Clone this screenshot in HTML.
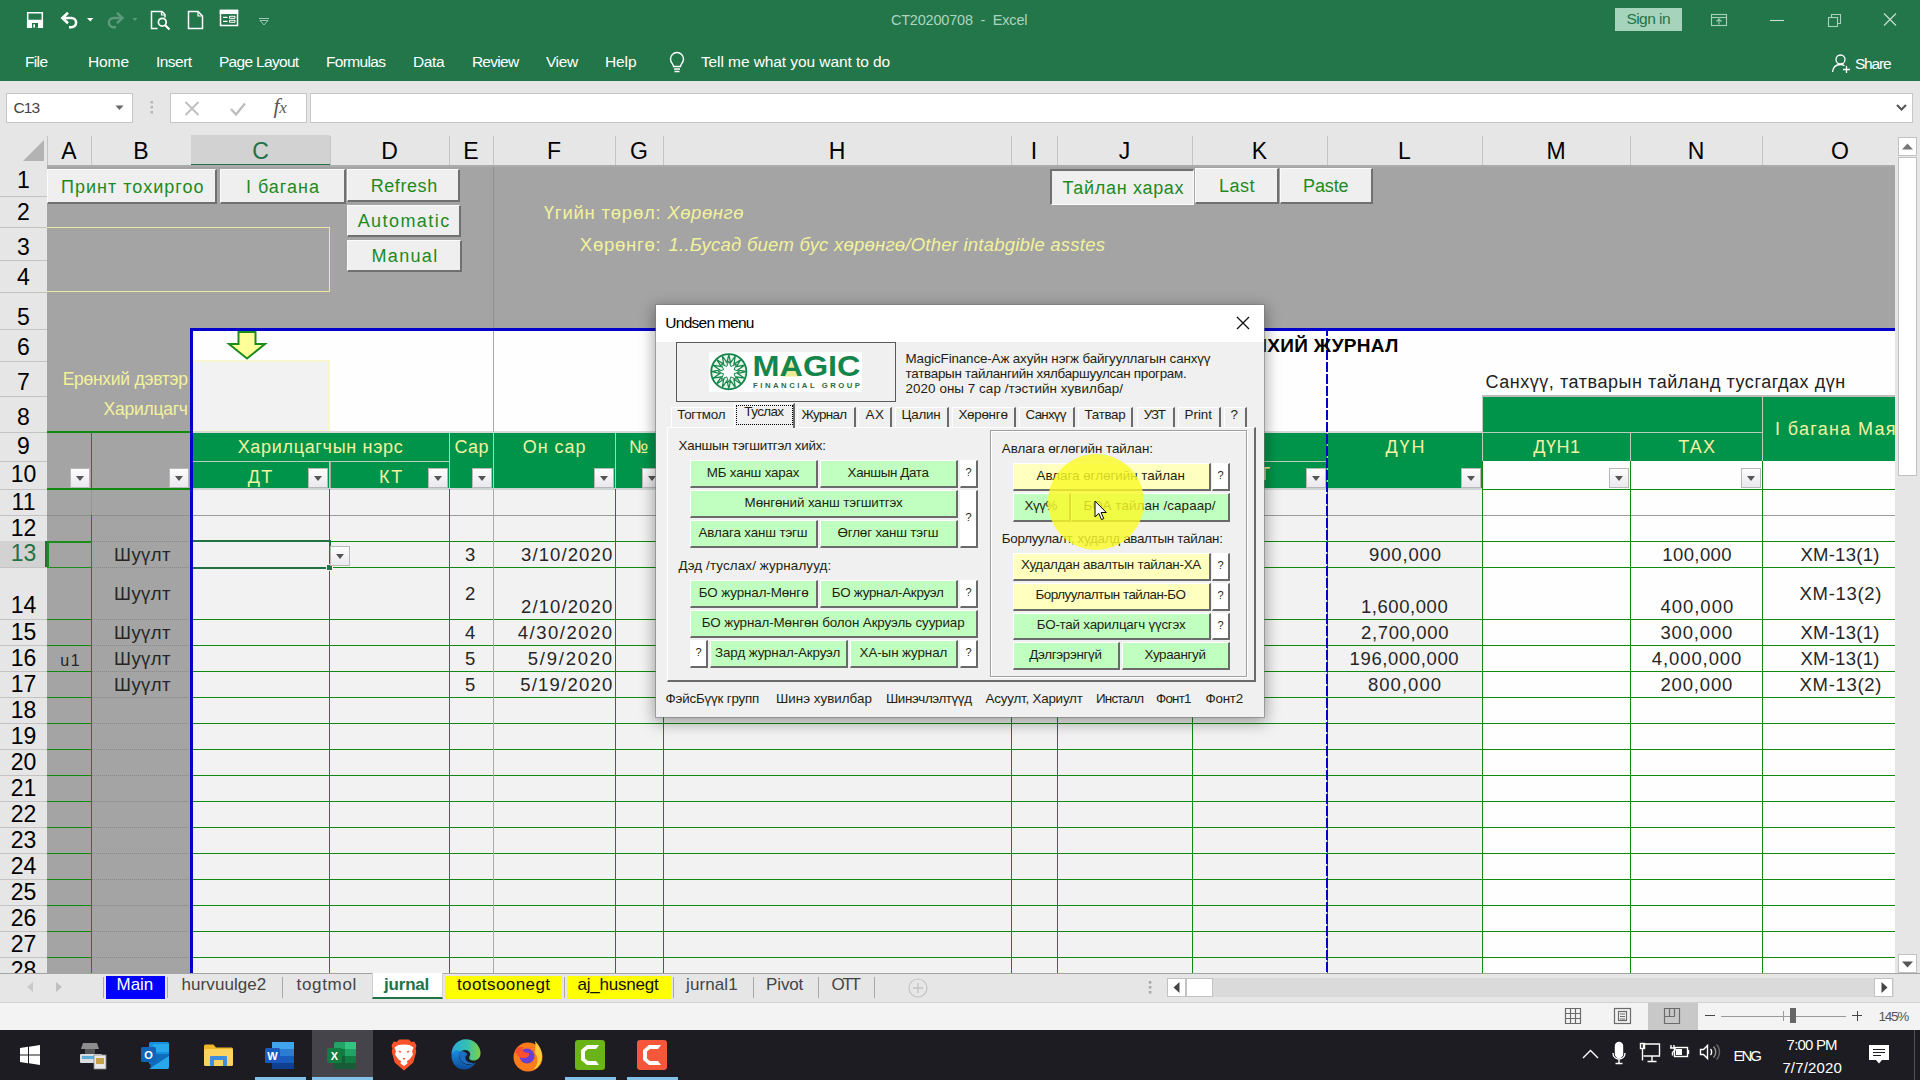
<!DOCTYPE html><html lang="mn"><head><meta charset="utf-8"><title>CT20200708 - Excel</title><style>

*{box-sizing:border-box}
html,body{margin:0;padding:0}
body{width:1920px;height:1080px;overflow:hidden;position:relative;background:#e6e6e6;
 font-family:"Liberation Sans",sans-serif;color:#000}
.a{position:absolute}
.t{position:absolute;white-space:nowrap;line-height:1}
svg{position:absolute;overflow:visible}


#tb{left:0;top:0;width:1920px;height:80.5px;background:#22764a}
.w{color:#fff}
.rt{font-size:15.5px;color:#fff;top:54px}
#fb{left:0;top:81px;width:1920px;height:54px;background:#e6e6e6}
.box{background:#fff;border:1px solid #c6c6c6}
.ch{top:135px;height:31px;font-size:23px;text-align:center;line-height:32px;color:#000}
.rh{left:0;width:47px;font-size:23px;text-align:center;color:#000;line-height:24px}


#grid{left:47px;top:166px;width:1848px;height:807px;background:#a4a4a4;overflow:hidden}
.g{position:absolute;background:#0f8a0f}
.hd{position:absolute;background:#00944a;color:#f3f3a2;font-size:17.500px;text-align:center;white-space:nowrap;overflow:hidden}
.fl{position:absolute;width:20px;height:20px;background:linear-gradient(#fdfdfd,#e9e9ee);border:1px solid #b8b8b8}
.fl:after{content:"";position:absolute;left:5px;top:7px;border:4px solid transparent;border-top:5px solid #555;border-bottom:0}
.c{position:absolute;white-space:nowrap;color:#262626}
.sb{position:absolute;background:#efefef;border:1px solid #fbfbfb;border-right:2px solid #707070;border-bottom:2px solid #707070}
.sbp{position:absolute;background:#efefef;border:2px solid #707070;border-right:1px solid #fbfbfb;border-bottom:1px solid #fbfbfb}
.yl{position:absolute;color:#eeeaa0;font-size:17px;white-space:nowrap;line-height:1}


#tabs{left:0;top:973px;width:1920px;height:30px;background:#e6e6e6;border-top:1px solid #a3a3a3;border-bottom:1px solid #d0d0d0}
#status{left:0;top:1003px;width:1920px;height:27px;background:#f3f3f3}
#task{left:0;top:1030px;width:1920px;height:50px;background:#1d1c22}
.st{position:absolute;top:976px;font-size:17.500px;color:#444;white-space:nowrap;line-height:1}
.sep{position:absolute;top:977px;width:1px;height:21px;background:#a8a8a8}
.tk{position:absolute;color:#fff;white-space:nowrap;line-height:1;font-size:15px}
.ul{position:absolute;top:1077px;height:3px;background:#84c1e6}


#dlg{left:656px;top:305px;width:608px;height:412px;background:#f0f0f0;box-shadow:0 0 0 1px rgba(120,120,120,.55),0 4px 14px 2px rgba(0,0,0,.35)}
#dlg .ttl{left:0;top:0;width:608px;height:37px;background:#fff}
.b{position:absolute;height:27px;border:1px solid #fff;border-right:2px solid #6a6a6a;border-bottom:2px solid #6a6a6a;
 font-size:13px;line-height:22px;text-align:center;white-space:nowrap;color:#1f1f10;word-spacing:2.500px;letter-spacing:.15px;overflow:hidden}
.bg{background:#c1ffc1}
.by{background:#ffffc0}
.bq{background:#fff;font-size:11px;letter-spacing:0}
.lb{position:absolute;font-size:13px;white-space:nowrap;line-height:1;color:#1f1f10;word-spacing:2.500px;letter-spacing:.15px}
.tab{position:absolute;top:102px;height:19px;background:#f0f0f0;border-top:1px solid #fff;border-left:1px solid #fff;border-right:2px solid #6a6a6a;
 font-size:13px;line-height:17px;text-align:center;color:#1f1f10;white-space:nowrap;letter-spacing:.1px}

</style></head><body>
<div class="a" id="grid">
<div class="a" style="left:146px;top:165px;width:1702px;height:101px;background:#fefefe"></div>
<div class="a" style="left:146px;top:194px;width:137px;height:72px;background:#f2f2f2;border:2px solid #f7f7cf;border-left:0"></div>
<div class="a" style="left:146px;top:323px;width:1289px;height:484px;background:#f2f2f2"></div>
<div class="a" style="left:1435px;top:295px;width:413px;height:512px;background:#fefefe"></div>
<div class="hd" style="left:146px;top:266px;width:256px;height:29px;line-height:29px;"></div>
<div class="hd" style="left:146px;top:296px;width:137px;height:27px;line-height:27px;"></div>
<div class="hd" style="left:284px;top:296px;width:118px;height:27px;line-height:27px;"></div>
<div class="hd" style="left:403px;top:266px;width:43px;height:57px;line-height:57px;"></div>
<div class="hd" style="left:447px;top:266px;width:121px;height:57px;line-height:57px;"></div>
<div class="hd" style="left:569px;top:266px;width:47px;height:57px;line-height:57px;"></div>
<div class="hd" style="left:617px;top:266px;width:663px;height:57px;line-height:57px;"></div>
<div class="hd" style="left:1281px;top:266px;width:154px;height:57px;line-height:57px;"></div>
<div class="hd" style="left:1436px;top:230px;width:279px;height:36px;line-height:36px;"></div>
<div class="hd" style="left:1436px;top:267px;width:147px;height:28px;line-height:28px;"></div>
<div class="hd" style="left:1584px;top:267px;width:131px;height:28px;line-height:28px;"></div>
<div class="hd" style="left:1716px;top:230px;width:132px;height:65px;line-height:65px;"></div>
<div class="a" style="left:282px;top:296px;width:1px;height:27px;background:#b9cdbf"></div>
<div class="a" style="left:402px;top:266px;width:1px;height:57px;background:#b9cdbf"></div>
<div class="a" style="left:446px;top:266px;width:1px;height:57px;background:#b9cdbf"></div>
<div class="a" style="left:568px;top:266px;width:1px;height:57px;background:#b9cdbf"></div>
<div class="a" style="left:616px;top:266px;width:1px;height:57px;background:#b9cdbf"></div>
<div class="a" style="left:1280px;top:266px;width:1px;height:57px;background:#b9cdbf"></div>
<div class="a" style="left:146px;top:295px;width:256px;height:1px;background:#b9cdbf"></div>
<div class="a" style="left:1435px;top:229px;width:413px;height:2px;background:#bdbdbd"></div>
<div class="a" style="left:146px;top:265px;width:1289px;height:2px;background:#d9d9d9"></div>
<div class="a" style="left:1435px;top:266px;width:280px;height:1px;background:#b9cdbf"></div>
<div class="a" style="left:1435px;top:230px;width:1px;height:65px;background:#b9cdbf"></div>
<div class="a" style="left:1583px;top:230px;width:1px;height:29px;top:266px;background:#b9cdbf"></div>
<div class="a" style="left:1715px;top:230px;width:1px;height:65px;background:#b9cdbf"></div>
<div class="g" style="left:0;top:265px;width:143px;height:2px"></div>
<div class="g" style="left:0;top:322px;width:143px;height:2px"></div>
<div class="g" style="left:44px;top:266px;width:1px;height:57px"></div>
<div class="g" style="left:0;top:375px;width:44px;height:1px"></div>
<div class="g" style="left:146px;top:375px;width:1702px;height:1px"></div>
<div class="a" style="left:45px;top:375px;width:98px;height:1px;background:repeating-linear-gradient(90deg,#8a8a8a 0 1px,#a0a0a0 1px 2px)"></div>
<div class="g" style="left:0;top:401px;width:44px;height:1px"></div>
<div class="g" style="left:146px;top:401px;width:1702px;height:1px"></div>
<div class="a" style="left:45px;top:401px;width:98px;height:1px;background:repeating-linear-gradient(90deg,#8a8a8a 0 1px,#a0a0a0 1px 2px)"></div>
<div class="g" style="left:0;top:453px;width:44px;height:1px"></div>
<div class="g" style="left:146px;top:453px;width:1702px;height:1px"></div>
<div class="a" style="left:45px;top:453px;width:98px;height:1px;background:repeating-linear-gradient(90deg,#8a8a8a 0 1px,#a0a0a0 1px 2px)"></div>
<div class="g" style="left:0;top:479px;width:44px;height:1px"></div>
<div class="g" style="left:146px;top:479px;width:1702px;height:1px"></div>
<div class="a" style="left:45px;top:479px;width:98px;height:1px;background:repeating-linear-gradient(90deg,#8a8a8a 0 1px,#a0a0a0 1px 2px)"></div>
<div class="g" style="left:0;top:505px;width:44px;height:1px"></div>
<div class="g" style="left:146px;top:505px;width:1702px;height:1px"></div>
<div class="a" style="left:45px;top:505px;width:98px;height:1px;background:repeating-linear-gradient(90deg,#8a8a8a 0 1px,#a0a0a0 1px 2px)"></div>
<div class="g" style="left:0;top:531px;width:44px;height:1px"></div>
<div class="g" style="left:146px;top:531px;width:1702px;height:1px"></div>
<div class="a" style="left:45px;top:531px;width:98px;height:1px;background:repeating-linear-gradient(90deg,#8a8a8a 0 1px,#a0a0a0 1px 2px)"></div>
<div class="g" style="left:0;top:557px;width:44px;height:1px"></div>
<div class="g" style="left:146px;top:557px;width:1702px;height:1px"></div>
<div class="a" style="left:45px;top:557px;width:98px;height:1px;background:repeating-linear-gradient(90deg,#8a8a8a 0 1px,#a0a0a0 1px 2px)"></div>
<div class="g" style="left:0;top:583px;width:44px;height:1px"></div>
<div class="g" style="left:146px;top:583px;width:1702px;height:1px"></div>
<div class="a" style="left:45px;top:583px;width:98px;height:1px;background:repeating-linear-gradient(90deg,#8a8a8a 0 1px,#a0a0a0 1px 2px)"></div>
<div class="g" style="left:0;top:609px;width:44px;height:1px"></div>
<div class="g" style="left:146px;top:609px;width:1702px;height:1px"></div>
<div class="a" style="left:45px;top:609px;width:98px;height:1px;background:repeating-linear-gradient(90deg,#8a8a8a 0 1px,#a0a0a0 1px 2px)"></div>
<div class="g" style="left:0;top:635px;width:44px;height:1px"></div>
<div class="g" style="left:146px;top:635px;width:1702px;height:1px"></div>
<div class="a" style="left:45px;top:635px;width:98px;height:1px;background:repeating-linear-gradient(90deg,#8a8a8a 0 1px,#a0a0a0 1px 2px)"></div>
<div class="g" style="left:0;top:661px;width:44px;height:1px"></div>
<div class="g" style="left:146px;top:661px;width:1702px;height:1px"></div>
<div class="a" style="left:45px;top:661px;width:98px;height:1px;background:repeating-linear-gradient(90deg,#8a8a8a 0 1px,#a0a0a0 1px 2px)"></div>
<div class="g" style="left:0;top:687px;width:44px;height:1px"></div>
<div class="g" style="left:146px;top:687px;width:1702px;height:1px"></div>
<div class="a" style="left:45px;top:687px;width:98px;height:1px;background:repeating-linear-gradient(90deg,#8a8a8a 0 1px,#a0a0a0 1px 2px)"></div>
<div class="g" style="left:0;top:713px;width:44px;height:1px"></div>
<div class="g" style="left:146px;top:713px;width:1702px;height:1px"></div>
<div class="a" style="left:45px;top:713px;width:98px;height:1px;background:repeating-linear-gradient(90deg,#8a8a8a 0 1px,#a0a0a0 1px 2px)"></div>
<div class="g" style="left:0;top:739px;width:44px;height:1px"></div>
<div class="g" style="left:146px;top:739px;width:1702px;height:1px"></div>
<div class="a" style="left:45px;top:739px;width:98px;height:1px;background:repeating-linear-gradient(90deg,#8a8a8a 0 1px,#a0a0a0 1px 2px)"></div>
<div class="g" style="left:0;top:765px;width:44px;height:1px"></div>
<div class="g" style="left:146px;top:765px;width:1702px;height:1px"></div>
<div class="a" style="left:45px;top:765px;width:98px;height:1px;background:repeating-linear-gradient(90deg,#8a8a8a 0 1px,#a0a0a0 1px 2px)"></div>
<div class="g" style="left:0;top:791px;width:44px;height:1px"></div>
<div class="g" style="left:146px;top:791px;width:1702px;height:1px"></div>
<div class="a" style="left:45px;top:791px;width:98px;height:1px;background:repeating-linear-gradient(90deg,#8a8a8a 0 1px,#a0a0a0 1px 2px)"></div>
<div class="a" style="left:146px;top:322px;width:1289px;height:2px;background:#cfd6d1"></div>
<div class="g" style="left:1435px;top:323px;width:413px;height:1px"></div>
<div class="a" style="left:617px;top:295px;width:662px;height:1px;background:#b9cdbf"></div>
<div class="a" style="left:0;top:349px;width:1848px;height:1px;background:#9b9b9b"></div>
<div class="a" style="left:0;top:349px;width:143px;height:1px;background:#8f8f8f"></div>
<div class="g" style="left:282px;top:323px;width:1px;height:484px"></div>
<div class="g" style="left:402px;top:323px;width:1px;height:484px"></div>
<div class="g" style="left:568px;top:323px;width:1px;height:484px"></div>
<div class="g" style="left:616px;top:323px;width:1px;height:484px"></div>
<div class="g" style="left:964px;top:323px;width:1px;height:484px"></div>
<div class="g" style="left:1010px;top:323px;width:1px;height:484px"></div>
<div class="g" style="left:1145px;top:323px;width:1px;height:484px"></div>
<div class="g" style="left:1435px;top:295px;width:1px;height:512px"></div>
<div class="g" style="left:1583px;top:295px;width:1px;height:512px"></div>
<div class="g" style="left:1715px;top:295px;width:1px;height:512px"></div>
<div class="g" style="left:44px;top:349px;width:1px;height:458px"></div>
<div class="a" style="left:44px;top:324px;width:1px;height:25px;background:repeating-linear-gradient(180deg,#8a8a8a 0 1px,#a0a0a0 1px 2px)"></div>
<div class="a" style="left:446px;top:0;width:1px;height:163px;background:#8e8e8e"></div>
<div class="a" style="left:446px;top:165px;width:1px;height:101px;background:#a9a9a9"></div>
<div class="a" style="left:446px;top:323px;width:1px;height:484px;background:#a9a9a9"></div>
<div class="a" style="left:143px;top:162px;width:1705px;height:3px;background:#0000cc"></div>
<div class="a" style="left:143px;top:162px;width:3px;height:645px;background:#0000cc"></div>
<div class="g" style="left:1280px;top:323px;width:1px;height:484px"></div>
<div class="a" style="left:1279px;top:165px;width:2px;height:642px;overflow:hidden"><div class="a" style="left:0;top:-7px;width:2px;height:660px;background:repeating-linear-gradient(180deg,transparent 0 2px,#0000cc 2px 12px)"></div></div>
<div class="fl" style="left:23px;top:302px"></div>
<div class="fl" style="left:122px;top:302px"></div>
<div class="fl" style="left:261px;top:302px"></div>
<div class="fl" style="left:381px;top:302px"></div>
<div class="fl" style="left:425px;top:302px"></div>
<div class="fl" style="left:547px;top:302px"></div>
<div class="fl" style="left:595px;top:302px"></div>
<div class="fl" style="left:1259px;top:302px"></div>
<div class="fl" style="left:1414px;top:302px"></div>
<div class="fl" style="left:1562px;top:302px"></div>
<div class="fl" style="left:1694px;top:302px"></div>
<div class="sb" style="left:0px;top:3px;width:170px;height:35px"></div>
<div class="c" style="left:14.0px;top:11.5px;font-size:18px;line-height:18px;letter-spacing:1.02px;color:#1e8a1e;">Принт тохиргоо</div>
<div class="sb" style="left:173px;top:3px;width:126px;height:35px"></div>
<div class="c" style="left:199.0px;top:11.5px;font-size:18px;line-height:18px;letter-spacing:0.99px;color:#1e8a1e;">I багана</div>
<div class="sb" style="left:300px;top:3px;width:113px;height:33px"></div>
<div class="c" style="left:323.7px;top:10.5px;font-size:18px;line-height:18px;letter-spacing:0.58px;color:#1e8a1e;">Refresh</div>
<div class="sb" style="left:300px;top:39px;width:114px;height:32px"></div>
<div class="c" style="left:310.7px;top:46.0px;font-size:18px;line-height:18px;letter-spacing:1.43px;color:#1e8a1e;">Automatic</div>
<div class="sb" style="left:300px;top:74px;width:115px;height:32px"></div>
<div class="c" style="left:324.5px;top:80.5px;font-size:18px;line-height:18px;letter-spacing:1.33px;color:#1e8a1e;">Manual</div>
<div class="sbp" style="left:1003px;top:3px;width:144px;height:36px"></div>
<div class="c" style="left:1015.5px;top:13.0px;font-size:18px;line-height:18px;letter-spacing:0.68px;color:#1e8a1e;">Тайлан харах</div>
<div class="sb" style="left:1148px;top:2px;width:84px;height:36px"></div>
<div class="c" style="left:1172.0px;top:10.6px;font-size:18px;line-height:18px;letter-spacing:0.49px;color:#1e8a1e;">Last</div>
<div class="sb" style="left:1233px;top:2px;width:93px;height:36px"></div>
<div class="c" style="left:1256.0px;top:10.6px;font-size:18px;line-height:18px;letter-spacing:-0.13px;color:#1e8a1e;">Paste</div>
<div class="a" style="left:-2px;top:61px;width:285px;height:65px;border:1px solid #e9e7a3"></div>
<svg style="left:180px;top:165px" width="40" height="29" viewBox="0 0 40 29"><path d="M11.500 1h17v12h9.500l-18 14.500-18-14.500h9.500z" fill="#ffff99" stroke="#1c8c1c" stroke-width="2"/></svg>
<div class="c" style="left:15.7px;top:204.6px;font-size:17.5px;line-height:17.5px;letter-spacing:-0.28px;color:#f2f29c;">Ерөнхий дэвтэр</div>
<div class="c" style="left:56.5px;top:234.6px;font-size:17.5px;line-height:17.5px;letter-spacing:-0.24px;color:#f2f29c;">Харилцагч</div>
<div class="c" style="left:496.8px;top:37.6px;font-size:18.5px;line-height:18.5px;letter-spacing:0.78px;color:#f2f29c;">Үгийн төрөл:</div>
<div class="c" style="left:532.8px;top:69.7px;font-size:18.5px;line-height:18.5px;letter-spacing:0.76px;color:#f2f29c;">Хөрөнгө:</div>
<div class="c" style="left:620.3px;top:37.6px;font-size:18.5px;line-height:18.5px;letter-spacing:0.57px;color:#f2f29c;font-style:italic;">Хөрөнгө</div>
<div class="c" style="left:621.5px;top:69.7px;font-size:18.5px;line-height:18.5px;letter-spacing:0.23px;color:#f2f29c;font-style:italic;">1..Бусад биет бус хөрөнгө/Other intabgible asstes</div>
<div class="c" style="left:1165.3px;top:169.9px;font-size:19px;line-height:19px;letter-spacing:0.29px;color:#000;font-weight:bold;">ЕРӨНХИЙ ЖУРНАЛ</div>
<div class="c" style="left:1438.4px;top:207.0px;font-size:18px;line-height:18px;letter-spacing:0.55px;color:#222;">Санхүү, татварын тайланд тусгагдах дүн</div>
<div class="c" style="left:190.7px;top:272.0px;font-size:18px;line-height:18px;letter-spacing:0.68px;color:#f3f3a2;">Харилцагчын нэрс</div>
<div class="c" style="left:200.7px;top:301.5px;font-size:18px;line-height:18px;letter-spacing:1.31px;color:#f3f3a2;">ДТ</div>
<div class="c" style="left:332.0px;top:301.5px;font-size:18px;line-height:18px;letter-spacing:1.72px;color:#f3f3a2;">КТ</div>
<div class="c" style="left:407.5px;top:272.0px;font-size:18px;line-height:18px;letter-spacing:0.39px;color:#f3f3a2;">Сар</div>
<div class="c" style="left:475.7px;top:272.0px;font-size:18px;line-height:18px;letter-spacing:0.97px;color:#f3f3a2;">Он сар</div>
<div class="c" style="left:582.0px;top:272.0px;font-size:18px;line-height:18px;letter-spacing:1.39px;color:#f3f3a2;">№</div>
<div class="c" style="left:1200.0px;top:299.0px;font-size:18px;line-height:18px;letter-spacing:1.52px;color:#f3f3a2;">КТ</div>
<div class="c" style="left:1338.4px;top:272.0px;font-size:18px;line-height:18px;letter-spacing:1.9px;color:#f3f3a2;">ДҮН</div>
<div class="c" style="left:1486.2px;top:272.0px;font-size:18px;line-height:18px;letter-spacing:0.53px;color:#f3f3a2;">ДҮН1</div>
<div class="c" style="left:1631.3px;top:272.0px;font-size:18px;line-height:18px;letter-spacing:1.1px;color:#f3f3a2;">ТАХ</div>
<div class="c" style="left:1728.1px;top:254.0px;font-size:18px;line-height:18px;letter-spacing:1.31px;color:#f3f3a2;">I багана Маягт</div>
<div class="c" style="left:67.0px;top:380.1px;font-size:18.5px;line-height:18.5px;letter-spacing:0.42px;color:#262626;">Шуүлт</div>
<div class="c" style="left:67.0px;top:419.2px;font-size:18.5px;line-height:18.5px;letter-spacing:0.42px;color:#262626;">Шуүлт</div>
<div class="c" style="left:67.0px;top:457.9px;font-size:18.5px;line-height:18.5px;letter-spacing:0.42px;color:#262626;">Шуүлт</div>
<div class="c" style="left:67.0px;top:484.1px;font-size:18.5px;line-height:18.5px;letter-spacing:0.42px;color:#262626;">Шуүлт</div>
<div class="c" style="left:67.0px;top:510.1px;font-size:18.5px;line-height:18.5px;letter-spacing:0.42px;color:#262626;">Шуүлт</div>
<div class="c" style="left:13.2px;top:487.4px;font-size:16px;line-height:16px;letter-spacing:1.7px;color:#262626;">u1</div>
<div class="c" style="left:418.0px;top:380.1px;font-size:18.5px;line-height:18.5px;letter-spacing:1.71px;color:#262626;">3</div>
<div class="c" style="left:474.0px;top:380.1px;font-size:18.5px;line-height:18.5px;letter-spacing:1.11px;color:#262626;">3/10/2020</div>
<div class="c" style="left:1322.0px;top:380.1px;font-size:18.5px;line-height:18.5px;letter-spacing:0.85px;color:#262626;">900,000</div>
<div class="c" style="left:1615.3px;top:380.1px;font-size:18.5px;line-height:18.5px;letter-spacing:0.4px;color:#262626;">100,000</div>
<div class="c" style="left:1753.4px;top:380.1px;font-size:18.5px;line-height:18.5px;letter-spacing:0.27px;color:#262626;">ХМ-13(1)</div>
<div class="c" style="left:418.0px;top:419.2px;font-size:18.5px;line-height:18.5px;letter-spacing:1.71px;color:#262626;">2</div>
<div class="c" style="left:474.0px;top:432.2px;font-size:18.5px;line-height:18.5px;letter-spacing:1.11px;color:#262626;">2/10/2020</div>
<div class="c" style="left:1314.0px;top:432.2px;font-size:18.5px;line-height:18.5px;letter-spacing:0.55px;color:#262626;">1,600,000</div>
<div class="c" style="left:1613.4px;top:432.2px;font-size:18.5px;line-height:18.5px;letter-spacing:0.99px;color:#262626;">400,000</div>
<div class="c" style="left:1752.6px;top:419.2px;font-size:18.5px;line-height:18.5px;letter-spacing:0.67px;color:#262626;">ХМ-13(2)</div>
<div class="c" style="left:418.0px;top:457.9px;font-size:18.5px;line-height:18.5px;letter-spacing:1.71px;color:#262626;">4</div>
<div class="c" style="left:470.7px;top:457.9px;font-size:18.5px;line-height:18.5px;letter-spacing:1.52px;color:#262626;">4/30/2020</div>
<div class="c" style="left:1314.0px;top:457.9px;font-size:18.5px;line-height:18.5px;letter-spacing:0.65px;color:#262626;">2,700,000</div>
<div class="c" style="left:1613.4px;top:457.9px;font-size:18.5px;line-height:18.5px;letter-spacing:0.85px;color:#262626;">300,000</div>
<div class="c" style="left:1753.4px;top:457.9px;font-size:18.5px;line-height:18.5px;letter-spacing:0.27px;color:#262626;">ХМ-13(1)</div>
<div class="c" style="left:418.0px;top:484.1px;font-size:18.5px;line-height:18.5px;letter-spacing:1.71px;color:#262626;">5</div>
<div class="c" style="left:480.7px;top:484.1px;font-size:18.5px;line-height:18.5px;letter-spacing:1.78px;color:#262626;">5/9/2020</div>
<div class="c" style="left:1302.6px;top:484.1px;font-size:18.5px;line-height:18.5px;letter-spacing:0.61px;color:#262626;">196,000,000</div>
<div class="c" style="left:1604.8px;top:484.1px;font-size:18.5px;line-height:18.5px;letter-spacing:0.9px;color:#262626;">4,000,000</div>
<div class="c" style="left:1753.4px;top:484.1px;font-size:18.5px;line-height:18.5px;letter-spacing:0.27px;color:#262626;">ХМ-13(1)</div>
<div class="c" style="left:418.0px;top:510.1px;font-size:18.5px;line-height:18.5px;letter-spacing:1.71px;color:#262626;">5</div>
<div class="c" style="left:473.2px;top:510.1px;font-size:18.5px;line-height:18.5px;letter-spacing:1.21px;color:#262626;">5/19/2020</div>
<div class="c" style="left:1321.0px;top:510.1px;font-size:18.5px;line-height:18.5px;letter-spacing:1.02px;color:#262626;">800,000</div>
<div class="c" style="left:1613.4px;top:510.1px;font-size:18.5px;line-height:18.5px;letter-spacing:0.85px;color:#262626;">200,000</div>
<div class="c" style="left:1752.6px;top:510.1px;font-size:18.5px;line-height:18.5px;letter-spacing:0.67px;color:#262626;">ХМ-13(2)</div>
<div class="a" style="left:146px;top:374px;width:138px;height:29px;border:2px solid #217346;border-left:0"></div>
<div class="a" style="left:279px;top:398px;width:7px;height:7px;background:#217346;border:1px solid #f2f2f2"></div>
<div class="fl" style="left:283px;top:380px;width:20px;height:20px"></div>
<div class="a" style="left:0;top:375px;width:45px;height:27px;border:1px solid #1c8c1c;border-width:2px 1px 1px 2px"></div>
</div>
<div class="a" id="tb"></div>
<svg style="left:26px;top:9px" width="260" height="24" viewBox="0 0 260 24" fill="none" stroke="#fff" stroke-width="1.500">
<path d="M1.700 3.700h14.600v14.600h-14.600z"/><path d="M1.700 11.500h14.600v6.800h-14.600z" fill="#fff"/><rect x="6" y="14" width="6" height="4.800" fill="#217346" stroke="none"/><rect x="7.300" y="15.300" width="1.700" height="3" fill="#fff" stroke="none"/>
<path d="M38 9h7.500a4.600 4.600 0 0 1 0 9.200h-2.500" stroke-width="2.600"/><path d="M42 3.800l-5.600 5.200 5.600 5.200" stroke-width="2.600"/>
<path d="M61 9h6.400l-3.200 3.600z" fill="#fff" stroke="none"/>
<path d="M95 9h-7.500a4.600 4.600 0 0 0 0 9.200h2.500" stroke="#5f9a7d" stroke-width="2.400"/><path d="M91 3.800l5.600 5.200-5.600 5.200" stroke="#5f9a7d" stroke-width="2.400"/>
<path d="M106.500 9h5l-2.500 3z" fill="#5f9a7d" stroke="none"/>
<path d="M139 8.500v-3l-3-3h-10.500v17h6"/><path d="M135.500 2.500v3.500h3.500" stroke-width="1.200"/><circle cx="136.300" cy="13.200" r="3.900" stroke-width="1.700"/><path d="M139.200 16.200l4.300 4.300" stroke-width="2.200"/>
<path d="M162.500 2.500h9.500l4.500 4.500v12.500h-14z"/><path d="M172 2.500v4.500h4.500" stroke-width="1.200"/>
<rect x="194.500" y="1.500" width="17" height="15"/><rect x="194.500" y="1.500" width="17" height="2.800" fill="#fff"/><path d="M197 8.300h4.500M197 12.300h4.500" stroke-width="1.300"/><path d="M203.500 7.300h5.500v2h-5.500zM203.500 11.300h5.500v2h-5.500z" stroke-width="1"/>
<path d="M233 9.500h10" stroke="#9cc7b0" stroke-width="1"/><path d="M234 11.500h8l-4 4.500z" stroke="#9cc7b0" stroke-width="1"/>
</svg>
<div class="t" style="left:890.9px;top:13px;font-size:14.5px;color:#acd5bf;letter-spacing:-0.19px;white-space:pre;">CT20200708  -  Excel</div>
<div class="a" style="left:1615px;top:8px;width:67px;height:23px;background:#a6d3bb"></div>
<div class="t" style="left:1626.4px;top:11px;font-size:15.5px;color:#217346;letter-spacing:-0.53px;">Sign in</div>
<svg style="left:1700px;top:8px" width="210" height="24" viewBox="0 0 210 24" fill="none" stroke="#a9d0bb" stroke-width="1.100">
<rect x="11.500" y="6.500" width="15" height="11"/><path d="M11.500 9.500h15"/><path d="M19 16.500v-5M16.500 13.500l2.500-2.500 2.500 2.500"/>
<path d="M70 12.500h14" stroke="#c4dfd0"/>
<rect x="128.500" y="9.500" width="9" height="9"/><path d="M131.500 9.500v-3h9v9h-3"/>
<path d="M184 5.500l12 12M196 5.500l-12 12" stroke="#c4dfd0" stroke-width="1.200"/>
</svg>
<div class="t" style="left:24.9px;top:54px;font-size:15.5px;color:#fff;letter-spacing:-0.59px;">File</div>
<div class="t" style="left:87.9px;top:54px;font-size:15.5px;color:#fff;letter-spacing:-0.05px;">Home</div>
<div class="t" style="left:155.9px;top:54px;font-size:15.5px;color:#fff;letter-spacing:-0.51px;">Insert</div>
<div class="t" style="left:218.9px;top:54px;font-size:15.5px;color:#fff;letter-spacing:-0.68px;">Page Layout</div>
<div class="t" style="left:325.9px;top:54px;font-size:15.5px;color:#fff;letter-spacing:-0.63px;">Formulas</div>
<div class="t" style="left:412.9px;top:54px;font-size:15.5px;color:#fff;letter-spacing:-0.35px;">Data</div>
<div class="t" style="left:471.9px;top:54px;font-size:15.5px;color:#fff;letter-spacing:-0.72px;">Review</div>
<div class="t" style="left:545.9px;top:54px;font-size:15.5px;color:#fff;letter-spacing:-0.37px;">View</div>
<div class="t" style="left:604.9px;top:54px;font-size:15.5px;color:#fff;letter-spacing:-0.06px;">Help</div>
<div class="t" style="left:700.9px;top:54px;font-size:15.5px;color:#fff;letter-spacing:-0.08px;">Tell me what you want to do</div>
<svg style="left:668px;top:51px" width="18" height="24" viewBox="0 0 18 24" fill="none" stroke="#fff" stroke-width="1.400">
<path d="M5.500 15.500c0-2.500-3-3.500-3-7.500a6.500 6.500 0 0 1 13 0c0 4-3 5-3 7.500z"/><path d="M6 18h6M6.500 20.500h5"/></svg>
<svg style="left:1831px;top:53px" width="22" height="22" viewBox="0 0 22 22" fill="none" stroke="#fff" stroke-width="1.300">
<circle cx="9.500" cy="6.500" r="4.500"/><path d="M1.500 19c.5-5 4-7.500 8-7.500 1.500 0 3 .5 4 1.200"/><path d="M15.500 13v7M12 16.500h7"/></svg>
<div class="t" style="left:1854.9px;top:56px;font-size:15.5px;color:#fff;letter-spacing:-1.17px;">Share</div>
<div class="a" id="fb"></div>
<div class="a box" style="left:6px;top:93px;width:127px;height:30px"></div>
<div class="t" style="left:13.4px;top:100px;font-size:15.5px;color:#444;letter-spacing:-0.87px;">C13</div>
<svg style="left:115px;top:105px" width="10" height="6"><path d="M0.500 0.500h8l-4 4.500z" fill="#666"/></svg>
<svg style="left:149px;top:100px" width="6" height="16"><g fill="#b5b5b5"><rect x="1.500" y="1" width="2.500" height="2.500"/><rect x="1.500" y="6" width="2.500" height="2.500"/><rect x="1.500" y="11" width="2.500" height="2.500"/></g></svg>
<div class="a box" style="left:170px;top:93px;width:137px;height:30px"></div>
<svg style="left:180px;top:98px" width="120" height="20" viewBox="0 0 120 20" fill="none" stroke="#bdbdbd" stroke-width="1.800">
<path d="M5.500 4l13 13M18.500 4l-13 13"/><path d="M51 11l5 5.500 9-11" stroke-width="2.400"/></svg>
<div class="t" style="left:273.5px;top:95px;font-size:22px;font-family:'Liberation Serif',serif;font-style:italic;font-weight:bold;color:#5a5a5a;letter-spacing:-0.5px"><b style="font-weight:normal">f</b><span style="font-size:17px;font-weight:normal">x</span></div>
<div class="a box" style="left:310px;top:93px;width:1603px;height:30px"></div>
<svg style="left:1896px;top:104px" width="12" height="8"><path d="M1 1l4.500 4.500 4.500-4.500" fill="none" stroke="#555" stroke-width="2"/></svg>
<div class="a" style="left:0;top:135px;width:1895px;height:31px;background:#e6e6e6"></div>
<svg style="left:22px;top:139px" width="24" height="24"><path d="M22 1v21h-21z" fill="#b3b3b3"/></svg>
<div class="a ch" style="left:47px;width:44px;">A</div>
<div class="a" style="left:91px;top:136px;width:1px;height:30px;background:#c3c3c3"></div>
<div class="a ch" style="left:91px;width:100px;">B</div>
<div class="a" style="left:191px;top:136px;width:1px;height:30px;background:#c3c3c3"></div>
<div class="a ch" style="left:191px;width:139px;background:#d2d2d2;color:#217346;border-bottom:2px solid #217346;">C</div>
<div class="a" style="left:330px;top:136px;width:1px;height:30px;background:#c3c3c3"></div>
<div class="a ch" style="left:330px;width:119px;">D</div>
<div class="a" style="left:449px;top:136px;width:1px;height:30px;background:#c3c3c3"></div>
<div class="a ch" style="left:449px;width:44px;">E</div>
<div class="a" style="left:493px;top:136px;width:1px;height:30px;background:#c3c3c3"></div>
<div class="a ch" style="left:493px;width:122px;">F</div>
<div class="a" style="left:615px;top:136px;width:1px;height:30px;background:#c3c3c3"></div>
<div class="a ch" style="left:615px;width:48px;">G</div>
<div class="a" style="left:663px;top:136px;width:1px;height:30px;background:#c3c3c3"></div>
<div class="a ch" style="left:663px;width:348px;">H</div>
<div class="a" style="left:1011px;top:136px;width:1px;height:30px;background:#c3c3c3"></div>
<div class="a ch" style="left:1011px;width:46px;">I</div>
<div class="a" style="left:1057px;top:136px;width:1px;height:30px;background:#c3c3c3"></div>
<div class="a ch" style="left:1057px;width:135px;">J</div>
<div class="a" style="left:1192px;top:136px;width:1px;height:30px;background:#c3c3c3"></div>
<div class="a ch" style="left:1192px;width:135px;">K</div>
<div class="a" style="left:1327px;top:136px;width:1px;height:30px;background:#c3c3c3"></div>
<div class="a ch" style="left:1327px;width:155px;">L</div>
<div class="a" style="left:1482px;top:136px;width:1px;height:30px;background:#c3c3c3"></div>
<div class="a ch" style="left:1482px;width:148px;">M</div>
<div class="a" style="left:1630px;top:136px;width:1px;height:30px;background:#c3c3c3"></div>
<div class="a ch" style="left:1630px;width:132px;">N</div>
<div class="a" style="left:1762px;top:136px;width:1px;height:30px;background:#c3c3c3"></div>
<div class="a ch" style="left:1762px;width:156px;">O</div>
<div class="a" style="left:1918px;top:136px;width:1px;height:30px;background:#c3c3c3"></div>
<div class="a" style="left:47px;top:136px;width:1px;height:30px;background:#c3c3c3"></div>
<div class="a" style="left:47px;top:165px;width:1848px;height:2px;background:#ababab"></div>
<div class="a" style="left:0;top:166px;width:47px;height:807px;background:#e6e6e6;overflow:hidden">
<div class="a rh" style="top:1.8px;">1</div>
<div class="a" style="left:0;top:30px;width:47px;height:1px;background:#c3c3c3"></div>
<div class="a rh" style="top:33.8px;">2</div>
<div class="a" style="left:0;top:61px;width:47px;height:1px;background:#c3c3c3"></div>
<div class="a rh" style="top:68.8px;">3</div>
<div class="a" style="left:0;top:94px;width:47px;height:1px;background:#c3c3c3"></div>
<div class="a rh" style="top:99.3px;">4</div>
<div class="a" style="left:0;top:126px;width:47px;height:1px;background:#c3c3c3"></div>
<div class="a rh" style="top:138.8px;">5</div>
<div class="a" style="left:0;top:163px;width:47px;height:1px;background:#c3c3c3"></div>
<div class="a rh" style="top:168.8px;">6</div>
<div class="a" style="left:0;top:195px;width:47px;height:1px;background:#c3c3c3"></div>
<div class="a rh" style="top:203.8px;">7</div>
<div class="a" style="left:0;top:230px;width:47px;height:1px;background:#c3c3c3"></div>
<div class="a rh" style="top:238.8px;">8</div>
<div class="a" style="left:0;top:266px;width:47px;height:1px;background:#c3c3c3"></div>
<div class="a rh" style="top:268.3px;">9</div>
<div class="a" style="left:0;top:295px;width:47px;height:1px;background:#c3c3c3"></div>
<div class="a rh" style="top:296.3px;">10</div>
<div class="a" style="left:0;top:323px;width:47px;height:1px;background:#c3c3c3"></div>
<div class="a rh" style="top:324.3px;">11</div>
<div class="a" style="left:0;top:349px;width:47px;height:1px;background:#c3c3c3"></div>
<div class="a rh" style="top:350.3px;">12</div>
<div class="a" style="left:0;top:375px;width:47px;height:1px;background:#c3c3c3"></div>
<div class="a" style="left:0;top:375px;width:47px;height:26px;background:#d2d2d2;border-right:2px solid #217346"></div>
<div class="a rh" style="top:375.3px;color:#217346;">13</div>
<div class="a" style="left:0;top:401px;width:47px;height:1px;background:#c3c3c3"></div>
<div class="a rh" style="top:427.3px;">14</div>
<div class="a" style="left:0;top:453px;width:47px;height:1px;background:#c3c3c3"></div>
<div class="a rh" style="top:453.8px;">15</div>
<div class="a" style="left:0;top:479px;width:47px;height:1px;background:#c3c3c3"></div>
<div class="a rh" style="top:479.8px;">16</div>
<div class="a" style="left:0;top:505px;width:47px;height:1px;background:#c3c3c3"></div>
<div class="a rh" style="top:505.8px;">17</div>
<div class="a" style="left:0;top:531px;width:47px;height:1px;background:#c3c3c3"></div>
<div class="a rh" style="top:531.8px;">18</div>
<div class="a" style="left:0;top:557px;width:47px;height:1px;background:#c3c3c3"></div>
<div class="a rh" style="top:557.8px;">19</div>
<div class="a" style="left:0;top:583px;width:47px;height:1px;background:#c3c3c3"></div>
<div class="a rh" style="top:583.8px;">20</div>
<div class="a" style="left:0;top:609px;width:47px;height:1px;background:#c3c3c3"></div>
<div class="a rh" style="top:609.8px;">21</div>
<div class="a" style="left:0;top:635px;width:47px;height:1px;background:#c3c3c3"></div>
<div class="a rh" style="top:635.8px;">22</div>
<div class="a" style="left:0;top:661px;width:47px;height:1px;background:#c3c3c3"></div>
<div class="a rh" style="top:661.8px;">23</div>
<div class="a" style="left:0;top:687px;width:47px;height:1px;background:#c3c3c3"></div>
<div class="a rh" style="top:687.8px;">24</div>
<div class="a" style="left:0;top:713px;width:47px;height:1px;background:#c3c3c3"></div>
<div class="a rh" style="top:713.8px;">25</div>
<div class="a" style="left:0;top:739px;width:47px;height:1px;background:#c3c3c3"></div>
<div class="a rh" style="top:739.8px;">26</div>
<div class="a" style="left:0;top:765px;width:47px;height:1px;background:#c3c3c3"></div>
<div class="a rh" style="top:765.8px;">27</div>
<div class="a" style="left:0;top:791px;width:47px;height:1px;background:#c3c3c3"></div>
<div class="a rh" style="top:791.8px;">28</div>
<div class="a" style="left:0;top:817px;width:47px;height:1px;background:#c3c3c3"></div>
</div>
<div class="a" style="left:1895px;top:135px;width:25px;height:838px;background:#e6e6e6"></div>
<div class="a" style="left:1898px;top:137px;width:19px;height:19px;background:#fff;border:1px solid #c2c2c2"></div>
<svg style="left:1902px;top:143px" width="11" height="7"><path d="M0 6.500h11l-5.500-6z" fill="#777"/></svg>
<div class="a" style="left:1898px;top:157px;width:19px;height:319px;background:#fff;border:1px solid #c2c2c2"></div>
<div class="a" style="left:1898px;top:954px;width:19px;height:19px;background:#fff;border:1px solid #c2c2c2"></div>
<svg style="left:1902px;top:961px" width="11" height="7"><path d="M0 0.500h11l-5.500 6z" fill="#555"/></svg>
<div class="a" id="tabs"></div>
<svg style="left:24px;top:980px" width="40" height="14"><path d="M9 2v10l-6-5z" fill="#c9c9c9"/><path d="M32 2v10l6-5z" fill="#c0c0c0"/></svg>
<div class="a" style="left:106px;top:976px;width:59px;height:23px;background:#0000ff"></div>
<div class="t" style="left:116.6px;top:975.5px;font-size:17px;color:#fff;letter-spacing:-0.05px;">Main</div>
<div class="t" style="left:181.6px;top:975.5px;font-size:17px;color:#444;letter-spacing:0.06px;">hurvuulge2</div>
<div class="t" style="left:296.6px;top:975.5px;font-size:17px;color:#444;letter-spacing:0.66px;">togtmol</div>
<div class="a" style="left:372px;top:973px;width:71px;height:26px;background:#fff;border-bottom:2px solid #217346;border-left:1px solid #cfcfcf;border-right:1px solid #cfcfcf"></div>
<div class="t" style="left:384.1px;top:975.5px;font-size:17px;color:#217346;letter-spacing:-0.22px;font-weight:bold;">jurnal</div>
<div class="a" style="left:445px;top:976px;width:117px;height:23px;background:#ffff00"></div>
<div class="t" style="left:456.9px;top:975.5px;font-size:17px;color:#111;letter-spacing:0.43px;">tootsoonegt</div>
<div class="a" style="left:567px;top:976px;width:104px;height:23px;background:#ffff00"></div>
<div class="t" style="left:577.4px;top:975.5px;font-size:17px;color:#111;letter-spacing:-0.2px;">aj_husnegt</div>
<div class="t" style="left:686.1px;top:975.5px;font-size:17px;color:#444;letter-spacing:0.08px;">jurnal1</div>
<div class="t" style="left:766.1px;top:975.5px;font-size:17px;color:#444;letter-spacing:-0.15px;">Pivot</div>
<div class="t" style="left:831.6px;top:975.5px;font-size:17px;color:#444;letter-spacing:-2.4px;">OTT</div>
<div class="sep" style="left:103px"></div>
<div class="sep" style="left:167px"></div>
<div class="sep" style="left:282px"></div>
<div class="sep" style="left:564px"></div>
<div class="sep" style="left:673px"></div>
<div class="sep" style="left:753px"></div>
<div class="sep" style="left:818px"></div>
<div class="sep" style="left:874px"></div>
<svg style="left:907px;top:977px" width="22" height="22"><circle cx="11" cy="11" r="9" fill="none" stroke="#c4c4c4" stroke-width="1.200"/><path d="M11 6v10M6 11h10" stroke="#c4c4c4" stroke-width="1.400"/></svg>
<svg style="left:1147px;top:980px" width="6" height="18"><g fill="#a9a9a9"><rect x="1.800" y="1" width="2.600" height="2.600"/><rect x="1.800" y="6" width="2.600" height="2.600"/><rect x="1.800" y="11" width="2.600" height="2.600"/></g></svg>
<div class="a" style="left:1167px;top:978px;width:727px;height:19px;background:#dadada"></div>
<div class="a" style="left:1167px;top:978px;width:19px;height:19px;background:#fff;border:1px solid #c2c2c2"></div>
<svg style="left:1173px;top:982px" width="7" height="11"><path d="M6.500 0v11l-6-5.500z" fill="#444"/></svg>
<div class="a" style="left:1186px;top:978px;width:27px;height:19px;background:#fff;border:1px solid #c2c2c2"></div>
<div class="a" style="left:1874px;top:978px;width:19px;height:19px;background:#fff;border:1px solid #c2c2c2"></div>
<svg style="left:1881px;top:982px" width="7" height="11"><path d="M0.500 0v11l6-5.500z" fill="#444"/></svg>
<div class="a" id="status"></div>
<div class="a" style="left:1648px;top:1003px;width:50px;height:27px;background:#c8c8c8"></div>
<svg style="left:1564px;top:1007px" width="120" height="20" viewBox="0 0 120 20" fill="none" stroke="#6b6b6b" stroke-width="1.200">
<path d="M1.500 1.500h15v15h-15zM6.500 1.500v15M11.500 1.500v15M1.500 6.500h15M1.500 11.500h15"/>
<rect x="50.500" y="1.500" width="16" height="15"/><rect x="54.500" y="4.500" width="8" height="9"/><path d="M56 7h5M56 9.500h5M56 12h5" stroke-width="1"/>
<path d="M100.500 1.500h15v15h-15zM105.500 1.500v8M110.500 1.500v8M100.500 9.500h10"/>
</svg>
<div class="a" style="left:1705px;top:1015px;width:10px;height:1px;background:#444"></div>
<div class="a" style="left:1721px;top:1016px;width:125px;height:1px;background:#9a9a9a"></div>
<div class="a" style="left:1783px;top:1011px;width:1px;height:10px;background:#9a9a9a"></div>
<div class="a" style="left:1790px;top:1008px;width:6px;height:15px;background:#666"></div>
<div class="a" style="left:1852px;top:1015px;width:10px;height:1px;background:#444"></div><div class="a" style="left:1856.5px;top:1011px;width:1px;height:10px;background:#444"></div>
<div class="t" style="left:1878.6px;top:1010px;font-size:13.5px;color:#555;letter-spacing:-1.28px;">145%</div>
<div class="a" id="task"></div>
<div class="a" style="left:312px;top:1030px;width:61px;height:50px;background:#45444b"></div>
<div class="ul" style="left:255px;width:51px"></div>
<div class="ul" style="left:312px;width:61px"></div>
<div class="ul" style="left:565px;width:51px"></div>
<div class="ul" style="left:627px;width:51px"></div>
<svg style="left:20px;top:1045px" width="20" height="20" viewBox="0 0 20 20"><path d="M0 3l8-1.200v7.700h-8zM9 1.700l11-1.700v9.500h-11zM0 10.500h8v7.700l-8-1.200zM9 10.500h11v9.500l-11-1.700z" fill="#fff"/></svg>
<svg style="left:78px;top:1040px" width="32" height="32" viewBox="0 0 32 32"><path d="M5 3h14l2 6h-18z" fill="#8d8d8d"/><rect x="7" y="9" width="10" height="5" fill="#555"/><rect x="2" y="14" width="22" height="9" rx="1" fill="#d9dde2"/><rect x="4" y="16" width="14" height="3" fill="#58b0d8"/><rect x="16" y="15" width="12" height="14" fill="#e9e9e9" stroke="#888" stroke-width=".8"/><rect x="18" y="18" width="8" height="6" fill="#c8a24a"/></svg>
<svg style="left:140px;top:1040px" width="32" height="32" viewBox="0 0 32 32"><rect x="9" y="2" width="20" height="22" rx="1.500" fill="#1490df"/><rect x="13" y="4" width="16" height="8" fill="#28a8ea"/><path d="M9 14l20 0v13a2 2 0 0 1-2 2h-16z" fill="#0f6cbd"/><path d="M9 29l20-13v11a2 2 0 0 1-2 2z" fill="#28a8ea"/><rect x="1" y="7" width="15" height="15" rx="1.500" fill="#0f64b5"/><text x="8.500" y="19" font-family="Liberation Sans,sans-serif" font-weight="bold" font-size="11" fill="#fff" text-anchor="middle">O</text></svg>
<svg style="left:203px;top:1040px" width="30" height="30" viewBox="0 0 30 30"><path d="M1 6a1.500 1.500 0 0 1 1.500-1.500h8l2.500 3h15.500a1.500 1.500 0 0 1 1.500 1.500v3h-29z" fill="#f0b429"/><rect x="1" y="9" width="29" height="17" rx="1.500" fill="#fbd35f"/><rect x="7" y="16" width="17" height="10" rx="1" fill="#3c8fdd"/><rect x="11" y="20" width="9" height="6" fill="#fbd35f"/></svg>
<svg style="left:264px;top:1040px" width="32" height="32" viewBox="0 0 32 32"><rect x="8" y="2" width="22" height="27" rx="1.500" fill="#2b7cd3"/><rect x="8" y="2" width="22" height="7" fill="#41a5ee"/><rect x="8" y="16" width="22" height="7" fill="#185abd"/><rect x="8" y="23" width="22" height="6" fill="#103f91"/><rect x="1" y="8" width="15" height="15" rx="1.500" fill="#185abd"/><text x="8.500" y="20" font-family="Liberation Sans,sans-serif" font-weight="bold" font-size="11" fill="#fff" text-anchor="middle">W</text></svg>
<svg style="left:326px;top:1040px" width="32" height="32" viewBox="0 0 32 32"><rect x="8" y="2" width="22" height="27" rx="1.500" fill="#21a366"/><rect x="19" y="2" width="11" height="7" fill="#33c481"/><rect x="8" y="9" width="11" height="7" fill="#107c41"/><rect x="8" y="16" width="22" height="13" fill="#185c37"/><rect x="19" y="16" width="11" height="7" fill="#107c41"/><rect x="1" y="8" width="15" height="15" rx="1.500" fill="#107c41"/><text x="8.500" y="20" font-family="Liberation Sans,sans-serif" font-weight="bold" font-size="11" fill="#fff" text-anchor="middle">X</text></svg>
<svg style="left:390px;top:1039px" width="28" height="32" viewBox="0 0 28 32"><path d="M14 0.500h5l2.200 2.500 3-0.600 2.300 4-1 3.200 0.800 2.800-3 11-9.300 8-9.300-8-3-11 0.800-2.800-1-3.200 2.300-4 3 0.600 2.200-2.500z" fill="#fb542b"/><path d="M14 5.500l5.500 0.500 4 2.500-1.500 4 1 3-3.500 5-2.500 1.500 0.500 2.500-3.500 2.500-3.500-2.500 0.500-2.500-2.500-1.500-3.500-5 1-3-1.500-4 4-2.500z" fill="#fff"/><path d="M8 11.500l3.500 1-1.500 1.500zM20 11.500l-3.500 1 1.500 1.500zM12.500 19h3l-1.500 2z" fill="#fb542b"/></svg>
<svg style="left:450px;top:1039px" width="32" height="32" viewBox="0 0 32 32"><defs><linearGradient id="eg1" x1="0" y1="0" x2="1" y2="0"><stop offset="0" stop-color="#2aa8d8"/><stop offset=".55" stop-color="#35c1b1"/><stop offset="1" stop-color="#7fd13f"/></linearGradient><linearGradient id="eg2" x1="0" y1="0" x2="0" y2="1"><stop offset="0" stop-color="#1b8fe0"/><stop offset="1" stop-color="#0c4a9c"/></linearGradient></defs><path d="M1.500 15a14.500 14.500 0 0 1 29-0.500c0 5-4 7.500-8 7-3-0.500-4-2-3-4 1-1.500 1-4-1-5.500-3-2-8-1-10 3-3-1-5-1-7 0z" fill="url(#eg1)"/><path d="M1.500 15c1-3 5-5 9-3-3 4-1.500 9 2.500 12 4 3 10 2 13-1-3 5.500-8 8-13 7.500-6.500-0.500-12-6.500-11.500-15.500z" fill="url(#eg2)"/><path d="M10.500 12c-2.500 3-1.500 8 2 11 3 2.500 8 3 11.500 1-4 0.500-7.500-1-8.500-4-0.500-2 0.500-4 2-4.500-1.500-2.500-4.500-4-7-3.500z" fill="#1a6fc4"/></svg>
<svg style="left:512px;top:1039px" width="32" height="34" viewBox="0 0 32 34"><circle cx="16" cy="18" r="14.500" fill="#ff7b1c"/><path d="M23 2c3 3 7 8 7 15a14 14 0 0 1-9 14c5-5 6-12 2-17 0-4 1-8 0-12z" fill="#ffcb3a"/><circle cx="15" cy="17" r="7.500" fill="#6a3fd6"/><path d="M3 12c2-4 6-5 9-4-2 2-2 4 0 5l5 1c1 3-2 5-5 5-4 1-7-3-9-7z" fill="#ff4f2e"/></svg>
<svg style="left:575px;top:1040px" width="30" height="30" viewBox="0 0 30 30"><rect x="0" y="0" width="30" height="30" rx="3" fill="#6ab417"/><path d="M24 5h-12l-6 5v10l6 5h12l-3-4h-8l-3-2.500v-7l3-2.500h8z" fill="#fff"/></svg>
<svg style="left:637px;top:1040px" width="30" height="30" viewBox="0 0 30 30"><rect x="0" y="0" width="30" height="30" rx="3" fill="#f5573b"/><path d="M24 5h-12l-6 5v10l6 5h12l-3-4h-8l-3-2.500v-7l3-2.500h8z" fill="#fff"/></svg>
<svg style="left:1580px;top:1040px" width="150" height="32" viewBox="0 0 150 32" fill="none" stroke="#fff" stroke-width="1.400">
<path d="M3 18l7.500-7.500 7.500 7.500"/>
<rect x="35.500" y="2.500" width="7" height="15" rx="3.500" fill="#fff"/><path d="M33 13c0 8 12 8 12 0M39 19.500v3.500M35.500 23.500h7"/>
<path d="M63.500 9v-5h16v12h-16"/><path d="M72 16v5M67.500 21.500h9"/><rect x="60.500" y="3.500" width="4" height="5"/><path d="M62.500 8.500v12"/>
<rect x="94.500" y="7.500" width="13" height="9"/><rect x="96" y="9" width="6" height="6" fill="#fff" stroke="none"/><path d="M108.500 10v4"/><path d="M91 5v3M94 5v3M90 8h5v2l-2.500 2.500v3"/>
<path d="M120.500 9.500h3l4-4v13l-4-4h-3z"/><path d="M130.500 9c1.500 1.500 1.500 4.500 0 6"/><path d="M133.500 6.500c3 3 3 8 0 11" stroke="#999"/><path d="M136.500 4.500c4 4 4 11 0 15" stroke="#666"/>
</svg>
<div class="t" style="left:1733.6px;top:1048px;font-size:15px;color:#fff;letter-spacing:-2.15px;">ENG</div>
<div class="t" style="left:1786.6px;top:1036.5px;font-size:15px;color:#fff;letter-spacing:-0.81px;">7:00 PM</div>
<div class="t" style="left:1782.4px;top:1059.5px;font-size:15px;color:#fff;letter-spacing:0.14px;">7/7/2020</div>
<svg style="left:1868px;top:1044px" width="22" height="22" viewBox="0 0 22 22"><path d="M1 1h20v15h-7l-3 3.500-3-3.500h-7z" fill="#fff"/><path d="M5 5.500h12M5 8.500h12M5 11.500h8" stroke="#1d1c22" stroke-width="1.200"/></svg>
<div class="a" style="left:1914px;top:1030px;width:1px;height:50px;background:#555"></div>
<div class="a" id="dlg">
<div class="a ttl"></div>
<div class="t" style="left:9.3px;top:10px;font-size:15.5px;letter-spacing:-0.74px;color:#000">Undsen menu</div>
<svg style="left:580px;top:11px" width="14" height="14"><path d="M1 1l12 12M13 1l-12 12" stroke="#111" stroke-width="1.300" fill="none"/></svg>
<div class="a" style="left:20px;top:37px;width:220px;height:60px;border:1px solid #5a5a5a;background:#f0f0f0"></div>
<div class="a" style="left:53px;top:47px;width:153px;height:40px;background:#fff"></div>
<svg style="left:53px;top:47px" width="153" height="40" viewBox="0 0 153 40">
<circle cx="19.8" cy="19.7" r="17.6" fill="#e9f7ee" stroke="#15864b" stroke-width="1.800"/>
<polygon points="19.8,2.7 21.6,10.7 26.3,4.0 24.9,12.1 31.8,7.7 27.4,14.6 35.5,13.2 28.8,17.9 36.8,19.7 28.8,21.5 35.5,26.2 27.4,24.8 31.8,31.7 24.9,27.3 26.3,35.4 21.6,28.7 19.8,36.7 18.0,28.7 13.3,35.4 14.7,27.3 7.8,31.7 12.2,24.8 4.1,26.2 10.8,21.5 2.8,19.7 10.8,17.9 4.1,13.2 12.2,14.6 7.8,7.7 14.7,12.1 13.3,4.0 18.0,10.7" fill="none" stroke="#15864b" stroke-width="1.250" stroke-linejoin="miter"/>
<polygon points="19.8,8.9 21.9,14.5 27.4,12.1 25.0,17.6 30.6,19.7 25.0,21.8 27.4,27.3 21.9,24.9 19.8,30.5 17.7,24.9 12.2,27.3 14.6,21.8 9.0,19.7 14.6,17.6 12.2,12.1 17.7,14.5" fill="#fff" stroke="#15864b" stroke-width="1"/>
<polygon points="81.500,9 73.500,24.400 89.500,24.400" fill="#ecea98"/>
<text x="43.500" y="24.400" font-family="Liberation Sans,sans-serif" font-weight="bold" font-size="29.600" fill="#15864b" textLength="108" lengthAdjust="spacingAndGlyphs">MAGIC</text>
<text x="44" y="36" font-family="Liberation Sans,sans-serif" font-weight="bold" font-size="7.700" fill="#2d6a4a" textLength="107" lengthAdjust="spacing">FINANCIAL GROUP</text>
</svg>
<div class="lb" style="left:249.6px;top:47.3px;font-size:13.4px;line-height:13.4px;letter-spacing:-0.14px;word-spacing:0;color:#1f1f10">MagicFinance-Аж ахуйн нэгж байгууллагын санхүү</div>
<div class="lb" style="left:249.6px;top:62.3px;font-size:13.4px;line-height:13.4px;letter-spacing:-0.27px;word-spacing:0;color:#1f1f10">татварын тайлангийн хялбаршуулсан програм.</div>
<div class="lb" style="left:249.6px;top:77.3px;font-size:13.4px;line-height:13.4px;letter-spacing:0.06px;word-spacing:0;color:#1f1f10">2020 оны 7 сар /тэстийн хувилбар/</div>
<div class="tab" style="left:15px;top:102px;width:66px;height:20px"></div>
<div class="lb" style="left:21.3px;top:102.7px;font-size:13.4px;line-height:13.4px;letter-spacing:-0.27px;word-spacing:0;color:#1f1f10">Тогтмол</div>
<div class="tab" style="left:141px;top:102px;width:59px;height:20px"></div>
<div class="lb" style="left:145.5px;top:102.7px;font-size:13.4px;line-height:13.4px;letter-spacing:-0.68px;word-spacing:0;color:#1f1f10">Журнал</div>
<div class="tab" style="left:202px;top:102px;width:34px;height:20px"></div>
<div class="lb" style="left:209.6px;top:102.7px;font-size:13.4px;line-height:13.4px;letter-spacing:0.42px;word-spacing:0;color:#1f1f10">АХ</div>
<div class="tab" style="left:239px;top:102px;width:54px;height:20px"></div>
<div class="lb" style="left:245.4px;top:102.7px;font-size:13.4px;line-height:13.4px;letter-spacing:-0.27px;word-spacing:0;color:#1f1f10">Цалин</div>
<div class="tab" style="left:296px;top:102px;width:64px;height:20px"></div>
<div class="lb" style="left:302.4px;top:102.7px;font-size:13.4px;line-height:13.4px;letter-spacing:-0.26px;word-spacing:0;color:#1f1f10">Хөрөнгө</div>
<div class="tab" style="left:363px;top:102px;width:56px;height:20px"></div>
<div class="lb" style="left:369.6px;top:102.7px;font-size:13.4px;line-height:13.4px;letter-spacing:-0.78px;word-spacing:0;color:#1f1f10">Санхүү</div>
<div class="tab" style="left:422px;top:102px;width:55px;height:20px"></div>
<div class="lb" style="left:428.6px;top:102.7px;font-size:13.4px;line-height:13.4px;letter-spacing:-0.33px;word-spacing:0;color:#1f1f10">Татвар</div>
<div class="tab" style="left:481px;top:102px;width:38px;height:20px"></div>
<div class="lb" style="left:487.8px;top:102.7px;font-size:13.4px;line-height:13.4px;letter-spacing:-1.0px;word-spacing:0;color:#1f1f10">УЗТ</div>
<div class="tab" style="left:522px;top:102px;width:43px;height:20px"></div>
<div class="lb" style="left:528.6px;top:102.7px;font-size:13.4px;line-height:13.4px;letter-spacing:-0.04px;word-spacing:0;color:#1f1f10">Print</div>
<div class="tab" style="left:568px;top:102px;width:23px;height:20px"></div>
<div class="lb" style="left:574.6px;top:102.7px;font-size:13.4px;line-height:13.4px;letter-spacing:-1.55px;word-spacing:0;color:#1f1f10">?</div>
<div class="a" style="left:11px;top:122px;width:589px;height:255px;background:#f0f0f0;border:1px solid #fff;border-right:2px solid #6a6a6a;border-bottom:2px solid #6a6a6a"></div>
<div class="tab" style="left:78px;top:98px;width:61px;height:25px"></div>
<div class="a" style="left:80px;top:100px;width:57px;height:20px;border:1px dotted #000"></div>
<div class="lb" style="left:88.3px;top:99.7px;font-size:13.4px;line-height:13.4px;letter-spacing:-0.57px;word-spacing:0;color:#1f1f10">Туслах</div>
<div class="lb" style="left:22.5px;top:134.4px;font-size:13.4px;line-height:13.4px;letter-spacing:-0.24px;word-spacing:0;color:#1f1f10">Ханшын тэгшитгэл хийх:</div>
<div class="b bg" style="left:34px;top:155px;width:128px;height:28px"></div>
<div class="lb" style="left:50.8px;top:161.0px;font-size:13.4px;line-height:13.4px;letter-spacing:-0.21px;word-spacing:0;color:#1f1f10">МБ ханш харах</div>
<div class="b bg" style="left:164px;top:155px;width:138px;height:28px"></div>
<div class="lb" style="left:191.6px;top:161.0px;font-size:13.4px;line-height:13.4px;letter-spacing:-0.36px;word-spacing:0;color:#1f1f10">Ханшын Дата</div>
<div class="b bq" style="left:304px;top:155px;width:18px;height:28px"></div>
<div class="lb" style="left:309.5px;top:162.0px;font-size:11px;line-height:11px;letter-spacing:-0.12px;word-spacing:0;color:#1f1f10">?</div>
<div class="b bg" style="left:34px;top:185px;width:268px;height:28px"></div>
<div class="lb" style="left:88.6px;top:191.0px;font-size:13.4px;line-height:13.4px;letter-spacing:-0.12px;word-spacing:0;color:#1f1f10">Мөнгөний ханш тэгшитгэх</div>
<div class="b bq" style="left:304px;top:185px;width:18px;height:58px"></div>
<div class="lb" style="left:309.5px;top:207.0px;font-size:11px;line-height:11px;letter-spacing:-0.12px;word-spacing:0;color:#1f1f10">?</div>
<div class="b bg" style="left:34px;top:215px;width:128px;height:28px"></div>
<div class="lb" style="left:42.5px;top:221.0px;font-size:13.4px;line-height:13.4px;letter-spacing:-0.14px;word-spacing:0;color:#1f1f10">Авлага ханш тэгш</div>
<div class="b bg" style="left:164px;top:215px;width:138px;height:28px"></div>
<div class="lb" style="left:181.6px;top:221.0px;font-size:13.4px;line-height:13.4px;letter-spacing:-0.18px;word-spacing:0;color:#1f1f10">Өглөг ханш тэгш</div>
<div class="lb" style="left:22.5px;top:254.4px;font-size:13.4px;line-height:13.4px;letter-spacing:0.12px;word-spacing:0;color:#1f1f10">Дэд /туслах/ журналууд:</div>
<div class="b bg" style="left:34px;top:275px;width:128px;height:28px"></div>
<div class="lb" style="left:42.8px;top:281.0px;font-size:13.4px;line-height:13.4px;letter-spacing:-0.11px;word-spacing:0;color:#1f1f10">БО журнал-Мөнгө</div>
<div class="b bg" style="left:164px;top:275px;width:138px;height:28px"></div>
<div class="lb" style="left:175.8px;top:281.0px;font-size:13.4px;line-height:13.4px;letter-spacing:-0.26px;word-spacing:0;color:#1f1f10">БО журнал-Акруэл</div>
<div class="b bq" style="left:304px;top:275px;width:18px;height:28px"></div>
<div class="lb" style="left:309.5px;top:282.0px;font-size:11px;line-height:11px;letter-spacing:-0.12px;word-spacing:0;color:#1f1f10">?</div>
<div class="b bg" style="left:34px;top:305px;width:288px;height:28px"></div>
<div class="lb" style="left:45.8px;top:311.0px;font-size:13.4px;line-height:13.4px;letter-spacing:-0.12px;word-spacing:0;color:#1f1f10">БО журнал-Мөнгөн болон Акруэль сууриар</div>
<div class="b bq" style="left:34px;top:335px;width:18px;height:28px"></div>
<div class="lb" style="left:39.5px;top:342.0px;font-size:11px;line-height:11px;letter-spacing:-0.12px;word-spacing:0;color:#1f1f10">?</div>
<div class="b bg" style="left:54px;top:335px;width:138px;height:28px"></div>
<div class="lb" style="left:59.1px;top:341.0px;font-size:13.4px;line-height:13.4px;letter-spacing:-0.13px;word-spacing:0;color:#1f1f10">Зард журнал-Акруэл</div>
<div class="b bg" style="left:194px;top:335px;width:108px;height:28px"></div>
<div class="lb" style="left:203.6px;top:341.0px;font-size:13.4px;line-height:13.4px;letter-spacing:-0.1px;word-spacing:0;color:#1f1f10">ХА-ын журнал</div>
<div class="b bq" style="left:304px;top:335px;width:18px;height:28px"></div>
<div class="lb" style="left:309.5px;top:342.0px;font-size:11px;line-height:11px;letter-spacing:-0.12px;word-spacing:0;color:#1f1f10">?</div>
<div class="a" style="left:334px;top:125px;width:257px;height:247px;border:1px solid #a0a0a0;box-shadow:1px 1px 0 #fff, inset 1px 1px 0 #fff"></div>
<div class="lb" style="left:345.8px;top:136.9px;font-size:13.4px;line-height:13.4px;letter-spacing:-0.05px;word-spacing:0;color:#1f1f10">Авлага өглөгийн тайлан:</div>
<div class="b by" style="left:357px;top:158px;width:198px;height:28px"></div>
<div class="lb" style="left:380.5px;top:164.0px;font-size:13.4px;line-height:13.4px;letter-spacing:-0.01px;word-spacing:0;color:#1f1f10">Авлага өглөгийн тайлан</div>
<div class="b bq" style="left:556px;top:158px;width:18px;height:28px"></div>
<div class="lb" style="left:561.5px;top:165.0px;font-size:11px;line-height:11px;letter-spacing:-0.12px;word-spacing:0;color:#1f1f10">?</div>
<div class="b bg" style="left:357px;top:188px;width:58px;height:29px"></div>
<div class="lb" style="left:368.6px;top:194.0px;font-size:13.4px;line-height:13.4px;letter-spacing:-0.48px;word-spacing:0;color:#1f1f10">Хүү%</div>
<div class="b bg" style="left:415px;top:188px;width:159px;height:29px"></div>
<div class="lb" style="left:427.5px;top:194.0px;font-size:13.4px;line-height:13.4px;letter-spacing:0.11px;word-spacing:0;color:#1f1f10">БОА тайлан /сараар/</div>
<div class="lb" style="left:345.8px;top:226.9px;font-size:13.4px;line-height:13.4px;letter-spacing:-0.29px;word-spacing:0;color:#1f1f10">Борлуулалт, худалд авалтын тайлан:</div>
<div class="b by" style="left:357px;top:248px;width:198px;height:28px"></div>
<div class="lb" style="left:365.0px;top:253.2px;font-size:13.4px;line-height:13.4px;letter-spacing:-0.26px;word-spacing:0;color:#1f1f10">Худалдан авалтын тайлан-ХА</div>
<div class="b bq" style="left:556px;top:248px;width:18px;height:28px"></div>
<div class="lb" style="left:561.5px;top:255.0px;font-size:11px;line-height:11px;letter-spacing:-0.12px;word-spacing:0;color:#1f1f10">?</div>
<div class="b by" style="left:357px;top:278px;width:198px;height:28px"></div>
<div class="lb" style="left:379.6px;top:282.7px;font-size:13.4px;line-height:13.4px;letter-spacing:-0.52px;word-spacing:0;color:#1f1f10">Борлуулалтын тайлан-БО</div>
<div class="b bq" style="left:556px;top:278px;width:18px;height:28px"></div>
<div class="lb" style="left:561.5px;top:285.0px;font-size:11px;line-height:11px;letter-spacing:-0.12px;word-spacing:0;color:#1f1f10">?</div>
<div class="b bg" style="left:357px;top:308px;width:198px;height:27px"></div>
<div class="lb" style="left:380.8px;top:313.0px;font-size:13.4px;line-height:13.4px;letter-spacing:-0.23px;word-spacing:0;color:#1f1f10">БО-тай харилцагч үүсгэх</div>
<div class="b bq" style="left:556px;top:308px;width:18px;height:27px"></div>
<div class="lb" style="left:561.5px;top:314.5px;font-size:11px;line-height:11px;letter-spacing:-0.12px;word-spacing:0;color:#1f1f10">?</div>
<div class="b bg" style="left:357px;top:337px;width:107px;height:28px"></div>
<div class="lb" style="left:373.3px;top:342.7px;font-size:13.4px;line-height:13.4px;letter-spacing:-0.32px;word-spacing:0;color:#1f1f10">Дэлгэрэнгүй</div>
<div class="b bg" style="left:466px;top:337px;width:108px;height:28px"></div>
<div class="lb" style="left:488.6px;top:342.7px;font-size:13.4px;line-height:13.4px;letter-spacing:-0.33px;word-spacing:0;color:#1f1f10">Хураангуй</div>
<div class="lb" style="left:9.6px;top:386.9px;font-size:13.4px;line-height:13.4px;letter-spacing:-0.2px;word-spacing:0;color:#1f1f10">ФэйсБүүк групп</div>
<div class="lb" style="left:120.0px;top:386.9px;font-size:13.4px;line-height:13.4px;letter-spacing:0.01px;word-spacing:0;color:#1f1f10">Шинэ хувилбар</div>
<div class="lb" style="left:230.0px;top:386.9px;font-size:13.4px;line-height:13.4px;letter-spacing:-0.41px;word-spacing:0;color:#1f1f10">Шинэчлэлтүүд</div>
<div class="lb" style="left:329.6px;top:386.9px;font-size:13.4px;line-height:13.4px;letter-spacing:-0.22px;word-spacing:0;color:#1f1f10">Асуулт, Хариулт</div>
<div class="lb" style="left:440.0px;top:386.9px;font-size:13.4px;line-height:13.4px;letter-spacing:-0.8px;word-spacing:0;color:#1f1f10">Инсталл</div>
<div class="lb" style="left:500.0px;top:386.9px;font-size:13.4px;line-height:13.4px;letter-spacing:-0.78px;word-spacing:0;color:#1f1f10">Фонт1</div>
<div class="lb" style="left:549.6px;top:386.9px;font-size:13.4px;line-height:13.4px;letter-spacing:-0.26px;word-spacing:0;color:#1f1f10">Фонт2</div>
</div>
<div class="a" style="left:1048px;top:454px;width:96px;height:96px;border-radius:50%;background:rgba(250,250,40,.82)"></div>
<svg style="left:1094px;top:500px" width="14" height="21" viewBox="0 0 14 21"><path d="M1 1v16l3.800-3.600 2.700 6.200 2.300-1-2.700-6.100h5.200z" fill="#fff" stroke="#000" stroke-width="1"/></svg>
</body></html>
